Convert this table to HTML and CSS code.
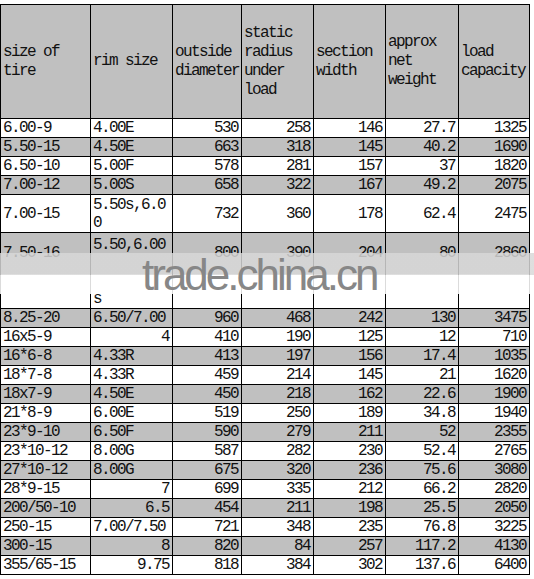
FILE: index.html
```html
<!DOCTYPE html>
<html>
<head>
<meta charset="utf-8">
<title>Tire sizes</title>
<link rel="stylesheet" href="styles.css">
</head>
<body>
<div class="page">
  <div class="grid">
    <div class="row head">
      <div class="c">size of<br>tire</div>
      <div class="c">rim size</div>
      <div class="c">outside<br>diameter</div>
      <div class="c">static<br>radius<br>under<br>load</div>
      <div class="c">section<br>width</div>
      <div class="c">approx<br>net<br>weight</div>
      <div class="c">load<br>capacity</div>
    </div>
    <div class="row">
      <div class="c">6.00-9</div><div class="c">4.00E</div><div class="c r">530</div><div class="c r">258</div><div class="c r">146</div><div class="c r">27.7</div><div class="c r">1325</div>
    </div>
    <div class="row alt">
      <div class="c">5.50-15</div><div class="c">4.50E</div><div class="c r">663</div><div class="c r">318</div><div class="c r">145</div><div class="c r">40.2</div><div class="c r">1690</div>
    </div>
    <div class="row">
      <div class="c">6.50-10</div><div class="c">5.00F</div><div class="c r">578</div><div class="c r">281</div><div class="c r">157</div><div class="c r">37</div><div class="c r">1820</div>
    </div>
    <div class="row alt">
      <div class="c">7.00-12</div><div class="c">5.00S</div><div class="c r">658</div><div class="c r">322</div><div class="c r">167</div><div class="c r">49.2</div><div class="c r">2075</div>
    </div>
    <div class="row two">
      <div class="c">7.00-15</div><div class="c">5.50s,6.0<br>0</div><div class="c r">732</div><div class="c r">360</div><div class="c r">178</div><div class="c r">62.4</div><div class="c r">2475</div>
    </div>
    <div class="row four">
      <div class="c up">7.50-16</div><div class="c low">5.50,6.00<br><br><br>s</div><div class="c r up">800</div><div class="c r up">390</div><div class="c r up">204</div><div class="c r up">80</div><div class="c r up">2860</div>
    </div>
    <div class="row alt">
      <div class="c">8.25-20</div><div class="c">6.50/7.00</div><div class="c r">960</div><div class="c r">468</div><div class="c r">242</div><div class="c r">130</div><div class="c r">3475</div>
    </div>
    <div class="row">
      <div class="c">16x5-9</div><div class="c r">4</div><div class="c r">410</div><div class="c r">190</div><div class="c r">125</div><div class="c r">12</div><div class="c r">710</div>
    </div>
    <div class="row alt">
      <div class="c">16*6-8</div><div class="c">4.33R</div><div class="c r">413</div><div class="c r">197</div><div class="c r">156</div><div class="c r">17.4</div><div class="c r">1035</div>
    </div>
    <div class="row">
      <div class="c">18*7-8</div><div class="c">4.33R</div><div class="c r">459</div><div class="c r">214</div><div class="c r">145</div><div class="c r">21</div><div class="c r">1620</div>
    </div>
    <div class="row alt">
      <div class="c">18x7-9</div><div class="c">4.50E</div><div class="c r">450</div><div class="c r">218</div><div class="c r">162</div><div class="c r">22.6</div><div class="c r">1900</div>
    </div>
    <div class="row">
      <div class="c">21*8-9</div><div class="c">6.00E</div><div class="c r">519</div><div class="c r">250</div><div class="c r">189</div><div class="c r">34.8</div><div class="c r">1940</div>
    </div>
    <div class="row alt">
      <div class="c">23*9-10</div><div class="c">6.50F</div><div class="c r">590</div><div class="c r">279</div><div class="c r">211</div><div class="c r">52</div><div class="c r">2355</div>
    </div>
    <div class="row">
      <div class="c">23*10-12</div><div class="c">8.00G</div><div class="c r">587</div><div class="c r">282</div><div class="c r">230</div><div class="c r">52.4</div><div class="c r">2765</div>
    </div>
    <div class="row alt">
      <div class="c">27*10-12</div><div class="c">8.00G</div><div class="c r">675</div><div class="c r">320</div><div class="c r">236</div><div class="c r">75.6</div><div class="c r">3080</div>
    </div>
    <div class="row">
      <div class="c">28*9-15</div><div class="c r">7</div><div class="c r">699</div><div class="c r">335</div><div class="c r">212</div><div class="c r">66.2</div><div class="c r">2820</div>
    </div>
    <div class="row alt">
      <div class="c">200/50-10</div><div class="c r">6.5</div><div class="c r">454</div><div class="c r">211</div><div class="c r">198</div><div class="c r">25.5</div><div class="c r">2050</div>
    </div>
    <div class="row">
      <div class="c">250-15</div><div class="c">7.00/7.50</div><div class="c r">721</div><div class="c r">348</div><div class="c r">235</div><div class="c r">76.8</div><div class="c r">3225</div>
    </div>
    <div class="row alt">
      <div class="c">300-15</div><div class="c r">8</div><div class="c r">820</div><div class="c r">84</div><div class="c r">257</div><div class="c r">117.2</div><div class="c r">4130</div>
    </div>
    <div class="row">
      <div class="c">355/65-15</div><div class="c r">9.75</div><div class="c r">818</div><div class="c r">384</div><div class="c r">302</div><div class="c r">137.6</div><div class="c r">6400</div>
    </div>
  </div>
  <div class="wm"><span class="wm-text">trade.china.cn</span></div>
</div>
</body>
</html>
```
FILE: styles.css
```css
html, body {
  margin: 0;
  padding: 0;
  background: #fff;
}

.page {
  position: relative;
  width: 534px;
  height: 579px;
  overflow: hidden;
  padding-top: 4px;
  box-sizing: border-box;
}

.grid {
  display: grid;
  grid-template-columns: 89px 81px 68px 71px 71px 72px 70px;
  gap: 1px;
  padding: 1px;
  background: #000;
  width: max-content;
  font-family: "Liberation Mono", "DejaVu Sans Mono", monospace;
  font-size: 16px;
  letter-spacing: -1.6px;
  color: #111;
}

.row {
  display: contents;
}

.c {
  display: flex;
  align-items: center;
  justify-content: flex-start;
  min-height: 18px;
  line-height: 18px;
  padding: 0 2px 0 2px;
  background: #fff;
  white-space: nowrap;
}

.c.r {
  justify-content: flex-end;
  padding-right: 3px;
}

.row.alt .c,
.row.head .c {
  background: #c0c0c0;
}

.row.head .c {
  height: 113px;
  line-height: 19px;
}

.row.two .c {
  height: 37px;
}

.row.four .c {
  height: 75px;
  background: linear-gradient(#c0c0c0 0 41px, #fff 41px);
}

.row.four .c.up {
  height: 39px;
  padding-bottom: 36px;
}

.row.four .c.low {
  align-items: flex-end;
}

.wm {
  position: absolute;
  left: 0;
  top: 253px;
  width: 534px;
  height: 41px;
  background: linear-gradient(rgba(216, 216, 216, 0.84) 0 22px, rgba(255, 255, 255, 0.86) 22px);
}

.wm-text {
  position: absolute;
  left: 142px;
  top: 0;
  font-family: "Liberation Sans", Arial, sans-serif;
  font-size: 44px;
  line-height: 44px;
  letter-spacing: -3px;
  color: #878787;
}
```
